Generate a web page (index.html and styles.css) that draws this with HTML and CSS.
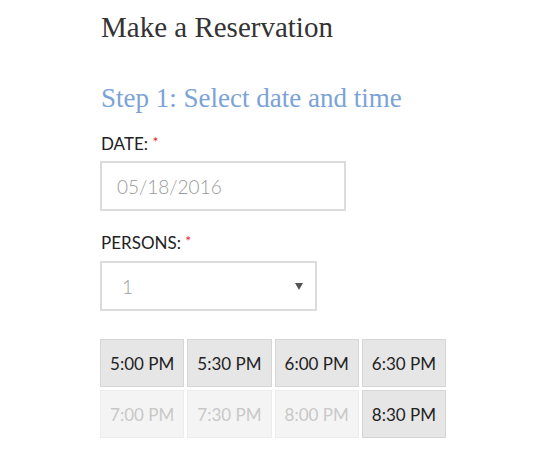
FILE: index.html
```html
<!DOCTYPE html>
<html>
<head>
    <title>Make a Reservation</title>
    <link rel="stylesheet" href="styles.css">
</head>
<body>
    <div class="booking">
        <h1>Make a Reservation</h1>
        <h2>Step 1: Select date and time</h2>

        <label class="field-label">DATE: <span class="req">*</span></label>
        <div class="input date-input">05/18/2016</div>

        <label class="field-label persons">PERSONS: <span class="req">*</span></label>
        <div class="input select-input">
            <span>1</span>
            <span class="caret"></span>
        </div>

        <div class="times">
            <div class="slot">5:00 PM</div>
            <div class="slot">5:30 PM</div>
            <div class="slot">6:00 PM</div>
            <div class="slot">6:30 PM</div>
            <div class="slot disabled">7:00 PM</div>
            <div class="slot disabled">7:30 PM</div>
            <div class="slot disabled">8:00 PM</div>
            <div class="slot">8:30 PM</div>
        </div>
    </div>
</body>
</html>
```

FILE: styles.css
```css
body { margin: 0; background: #fff; font-family: Lato, "Open Sans", sans-serif; color: #222; }
.booking { padding: 10px 0 0 100px; width: 346px; }
h1 { font-family: "Liberation Serif", serif; font-weight: normal; font-size: 29px; color: #333; margin: 0 0 0 1px; line-height: 34px; }
h2 { font-family: "Liberation Serif", serif; font-weight: normal; font-size: 27px; color: #7aa3d8; margin: 38px 0 0 1px; line-height: 32px; }
.field-label { display: block; font-size: 17px; line-height: 20px; margin: 20px 0 7px 1px; }
.field-label.persons { margin: 22px 0 8px 1px; }
.req { color: #e8272d; font-size: 14px; vertical-align: top; line-height: 16px; }
.input { box-sizing: border-box; border: 2px solid #dcdcdc; background: #fff; color: #9a9a9a; font-size: 19px; font-weight: 300; height: 50px; display: flex; align-items: center; padding: 0 15px; }
.date-input { width: 246px; }
.select-input { width: 217px; justify-content: space-between; padding: 0 12px 0 20px; }
.caret { width: 0; height: 0; border-left: 4px solid transparent; border-right: 4px solid transparent; border-top: 7px solid #555; }
.times { display: grid; grid-template-columns: repeat(4, 1fr); gap: 3px; margin-top: 28px; }
.slot { box-sizing: border-box; height: 48px; border: 1px solid #d6d6d6; background: #e6e6e6; display: flex; align-items: center; justify-content: center; font-size: 17px; color: #222; }
.slot.disabled { background: #f4f4f4; border-color: #ececec; color: #c8c8c8; }
```
